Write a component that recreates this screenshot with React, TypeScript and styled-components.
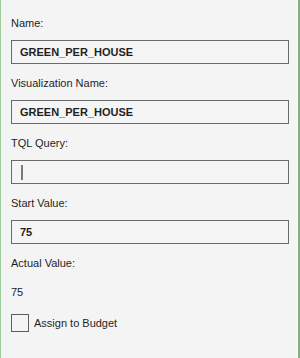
import React from "react";
import styled, { createGlobalStyle } from "styled-components";

const Global = createGlobalStyle`
  html, body { margin: 0; padding: 0; background: #f4f4f4; }
  * { box-sizing: border-box; }
`;

const Panel = styled.div`
  width: 300px;
  height: 358px;
  background: #f4f4f4;
  border-left: 1px solid #9ccb9c;
  border-right: 2px solid #7fb27f;
  box-shadow: inset -1px 0 0 #fbfbfb;
  padding: 16px 11px 0 10px;
  display: flex;
  flex-direction: column;
  font-family: "Liberation Sans", Arial, sans-serif;
  font-size: 11px;
  color: #1f1f1f;
`;

const Field = styled.div`
  display: flex;
  flex-direction: column;
  gap: 10px;
  margin-bottom: 12px;
`;

const Label = styled.div`
  height: 14px;
  line-height: 14px;
`;

const Box = styled.div`
  height: 24px;
  border: 1px solid #6b6b6b;
  background: #f5f5f5;
  padding-left: 8px;
  display: flex;
  align-items: center;
  font-weight: bold;
  width: 278px;
`;

const Caret = styled.span`
  width: 2px;
  height: 15px;
  background: #7a7a7a;
  margin-left: 1px;
`;

const Plain = styled.div`
  height: 24px;
  line-height: 24px;
`;

const CheckRow = styled.label`
  display: flex;
  align-items: center;
  gap: 5px;
  margin-top: -2px;
`;

const CheckBox = styled.span`
  width: 18px;
  height: 18px;
  border: 1px solid #5e5e5e;
  background: #f4f4f4;
`;

export default function App() {
  return (
    <>
      <Global />
      <Panel>
        <Field>
          <Label>Name:</Label>
          <Box>GREEN_PER_HOUSE</Box>
        </Field>
        <Field>
          <Label>Visualization Name:</Label>
          <Box>GREEN_PER_HOUSE</Box>
        </Field>
        <Field>
          <Label>TQL Query:</Label>
          <Box>
            <Caret />
          </Box>
        </Field>
        <Field>
          <Label>Start Value:</Label>
          <Box>75</Box>
        </Field>
        <Field>
          <Label>Actual Value:</Label>
          <Plain>75</Plain>
        </Field>
        <CheckRow>
          <CheckBox />
          Assign to Budget
        </CheckRow>
      </Panel>
    </>
  );
}
